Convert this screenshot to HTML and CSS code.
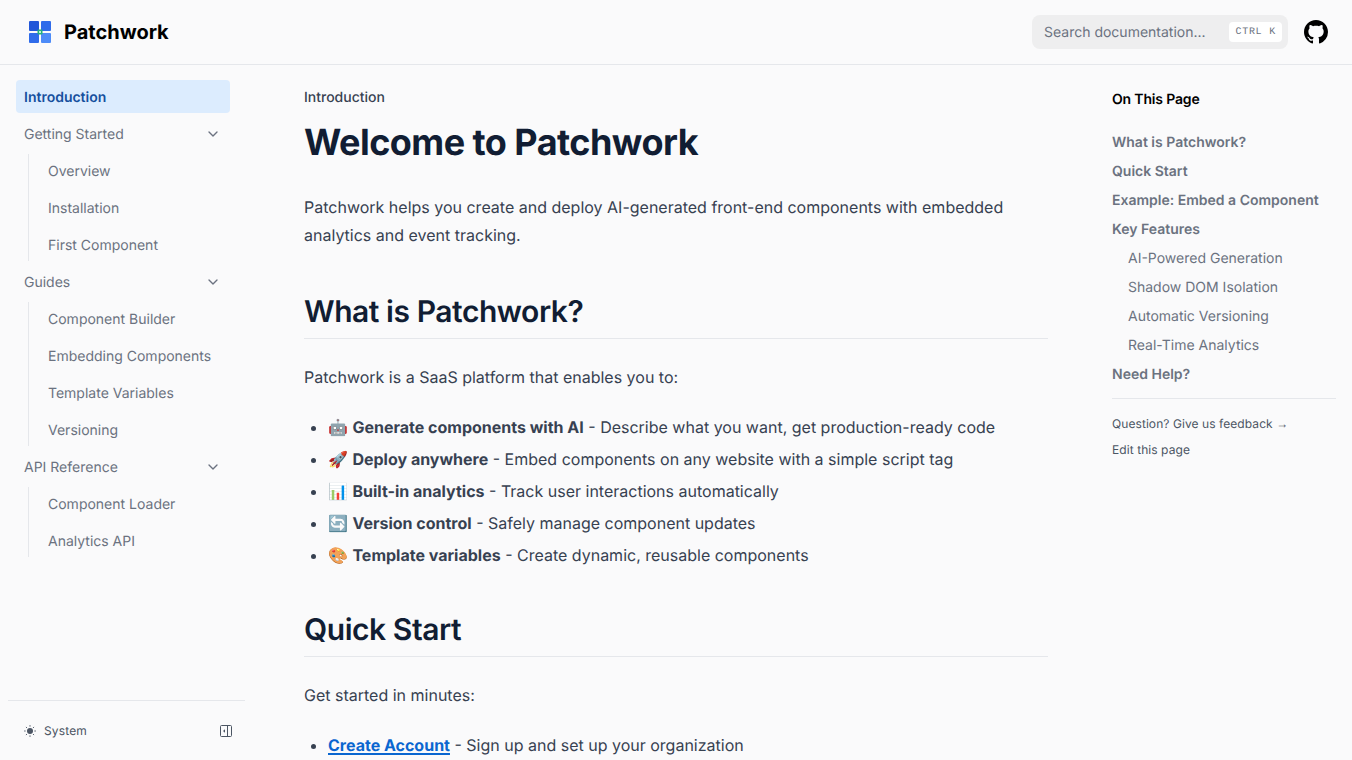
FILE: index.html
```html
<!DOCTYPE html>
<html lang="en">
<head>
<meta charset="utf-8">
<title>Welcome to Patchwork</title>
<link rel="stylesheet" href="styles.css">
</head>
<body>
<header class="topbar">
  <a class="brand">
    <svg class="logo" width="24" height="24" viewBox="0 0 24 24">
      <rect x="1" y="1" width="10" height="10" rx="1" fill="#2257d8"/>
      <rect x="13" y="1" width="10" height="10" rx="1" fill="#2f6bea"/>
      <rect x="1" y="13" width="10" height="10" rx="1" fill="#2f6bea"/>
      <rect x="13" y="13" width="10" height="10" rx="1" fill="#4d8bf8"/>
      <rect x="9.5" y="9.5" width="5" height="5" rx="1.2" fill="#22b07d"/>
      <rect x="11" y="11" width="2" height="2" fill="#bfeeda"/>
    </svg>
    <span class="brand-name">Patchwork</span>
  </a>
  <div class="top-actions">
    <div class="search">
      <span class="search-text">Search documentation...</span>
      <kbd class="kbd"><span>CTRL</span><span>K</span></kbd>
    </div>
    <svg class="github" width="24" height="24" viewBox="0 0 16 16" fill="#000"><path d="M8 0C3.58 0 0 3.58 0 8c0 3.54 2.29 6.53 5.47 7.59.4.07.55-.17.55-.38 0-.19-.01-.82-.01-1.49-2.01.37-2.53-.49-2.69-.94-.09-.23-.48-.94-.82-1.13-.28-.15-.68-.52-.01-.53.63-.01 1.08.58 1.23.82.72 1.21 1.87.87 2.33.66.07-.52.28-.87.51-1.07-1.78-.2-3.64-.89-3.64-3.95 0-.87.31-1.59.82-2.15-.08-.2-.36-1.02.08-2.12 0 0 .67-.21 2.2.82.64-.18 1.32-.27 2-.27s1.36.09 2 .27c1.53-1.04 2.2-.82 2.2-.82.44 1.1.16 1.92.08 2.12.51.56.82 1.27.82 2.15 0 3.07-1.87 3.75-3.65 3.95.29.25.54.73.54 1.48 0 1.07-.01 1.93-.01 2.2 0 .21.15.46.55.38A8.01 8.01 0 0 0 16 8c0-4.42-3.58-8-8-8z"/></svg>
  </div>
</header>

<div class="layout">
  <aside class="sidebar">
    <nav class="side-nav">
      <a class="side-link active">Introduction</a>
      <a class="side-link folder">Getting Started<svg class="chev" width="16" height="16" viewBox="0 0 24 24" fill="none" stroke="currentColor" stroke-width="2" stroke-linecap="round" stroke-linejoin="round"><path d="M6 9l6 6 6-6"/></svg></a>
      <div class="sub">
        <a class="side-link">Overview</a>
        <a class="side-link">Installation</a>
        <a class="side-link">First Component</a>
      </div>
      <a class="side-link folder">Guides<svg class="chev" width="16" height="16" viewBox="0 0 24 24" fill="none" stroke="currentColor" stroke-width="2" stroke-linecap="round" stroke-linejoin="round"><path d="M6 9l6 6 6-6"/></svg></a>
      <div class="sub">
        <a class="side-link">Component Builder</a>
        <a class="side-link">Embedding Components</a>
        <a class="side-link">Template Variables</a>
        <a class="side-link">Versioning</a>
      </div>
      <a class="side-link folder">API Reference<svg class="chev" width="16" height="16" viewBox="0 0 24 24" fill="none" stroke="currentColor" stroke-width="2" stroke-linecap="round" stroke-linejoin="round"><path d="M6 9l6 6 6-6"/></svg></a>
      <div class="sub">
        <a class="side-link">Component Loader</a>
        <a class="side-link">Analytics API</a>
      </div>
    </nav>
    <div class="side-foot">
      <span class="theme">
        <svg width="12" height="12" viewBox="0 0 12 12" fill="#4b5563" stroke="#4b5563" stroke-width="1" stroke-linecap="round"><circle cx="6" cy="6" r="3" stroke="none"/><path d="M6 .6v.6M6 10.8v.6M.6 6h.6M10.8 6h.6M2.2 2.2l.4.4M9.4 9.4l.4.4M2.2 9.8l.4-.4M9.4 2.6l.4-.4"/></svg>
        System
      </span>
      <svg class="collapse" width="14" height="14" viewBox="0 0 14 14" fill="none" stroke="#4b5563"><rect x="1.5" y="1.5" width="11" height="11" rx="1"/><path d="M8.5 1.5v11"/><path d="M6 5.2v3.6L4 7z" fill="#4b5563" stroke="none"/></svg>
    </div>
  </aside>

  <main class="article">
    <div class="crumb">Introduction</div>
    <h1>Welcome to Patchwork</h1>
    <p class="lead">Patchwork helps you create and deploy AI-generated front-end components with embedded analytics and event tracking.</p>
    <h2>What is Patchwork?</h2>
    <p>Patchwork is a SaaS platform that enables you to:</p>
    <ul>
      <li>🤖 <strong>Generate components with AI</strong> - Describe what you want, get production-ready code</li>
      <li>🚀 <strong>Deploy anywhere</strong> - Embed components on any website with a simple script tag</li>
      <li>📊 <strong>Built-in analytics</strong> - Track user interactions automatically</li>
      <li>🔄 <strong>Version control</strong> - Safely manage component updates</li>
      <li>🎨 <strong>Template variables</strong> - Create dynamic, reusable components</li>
    </ul>
    <h2>Quick Start</h2>
    <p>Get started in minutes:</p>
    <ul>
      <li><a class="doc-link">Create Account</a> - Sign up and set up your organization</li>
    </ul>
  </main>

  <aside class="toc">
    <div class="toc-title">On This Page</div>
    <ul class="toc-list">
      <li class="toc-h2">What is Patchwork?</li>
      <li class="toc-h2">Quick Start</li>
      <li class="toc-h2">Example: Embed a Component</li>
      <li class="toc-h2">Key Features</li>
      <li class="toc-h3">AI-Powered Generation</li>
      <li class="toc-h3">Shadow DOM Isolation</li>
      <li class="toc-h3">Automatic Versioning</li>
      <li class="toc-h3">Real-Time Analytics</li>
      <li class="toc-h2">Need Help?</li>
    </ul>
    <div class="toc-foot">
      <a>Question? Give us feedback <span class="arrow">→</span></a>
      <a>Edit this page</a>
    </div>
  </aside>
</div>
</body>
</html>
```
FILE: styles.css
```css
* { box-sizing: border-box; }
html, body { height: 100%; overflow: hidden; }
body {
  margin: 0;
  background: #fafafb;
  color: #111827;
  font-family: Inter, "Noto Color Emoji", sans-serif;
  font-size: 16px;
  text-rendering: geometricPrecision;
}
.topbar {
  height: 65px;
  display: flex;
  align-items: center;
  justify-content: space-between;
  padding: 0 24px 0 28px;
  border-bottom: 1px solid #e5e7eb;
}
.brand { display: flex; align-items: center; gap: 12px; }
.logo { display: block; }
.brand-name { font-size: 20px; font-weight: 700; color: #000; line-height: 28px; }
.top-actions { display: flex; align-items: center; gap: 16px; }
.search {
  width: 256px;
  height: 34px;
  border-radius: 8px;
  background: #eeeeef;
  display: flex;
  align-items: center;
  justify-content: space-between;
  padding: 0 6px 0 12px;
}
.search-text { font-size: 14px; color: #6b7280; }
.kbd {
  height: 20px;
  background: #fff;
  border-radius: 4px;
  padding: 1px 6px 0 6px;
  display: flex;
  align-items: center;
  gap: 7px;
  font-family: "Liberation Mono", monospace;
  font-size: 10px;
  letter-spacing: .7px;
  color: #6b7280;
}
.github { display: block; }
.layout {
  display: grid;
  grid-template-columns: 256px 1fr 256px;
  height: 695px;
}
.sidebar {
  display: flex;
  flex-direction: column;
  justify-content: space-between;
  min-height: 0;
}
.side-nav {
  padding: 15px 26px 0 16px;
  display: flex;
  flex-direction: column;
  gap: 4px;
}
.side-link {
  display: flex;
  align-items: center;
  justify-content: space-between;
  height: 33px;
  padding: 2px 8px 0;
  border-radius: 4px;
  font-size: 14px;
  color: #6b7280;
}
.side-link.active {
  background: #dcecfe;
  color: #16509e;
  font-weight: 600;
}
.chev { color: #6b7280; margin: -2px 1px 0 0; }
.sub {
  margin-left: 12px;
  padding-left: 11px;
  display: flex;
  flex-direction: column;
  gap: 4px;
  border-left: 1px solid #e5e7eb;
}
.side-foot {
  margin: 0 11px 0 8px;
  height: 60px;
  border-top: 1px solid #e5e7eb;
  display: flex;
  align-items: center;
  justify-content: space-between;
  padding: 0 12px 0 16px;
}
.theme { display: flex; align-items: center; gap: 8px; font-size: 12px; letter-spacing: .012em; color: #4b5563; }
.article { padding: 0 48px; overflow: hidden; min-width: 0; color: #374151; }
.crumb { margin-top: 23px; font-size: 14px; font-weight: 500; line-height: 20px; color: #374151; }
h1 {
  margin: 14px 0 0;
  font-size: 36px;
  line-height: 40px;
  font-weight: 700;
  letter-spacing: -.015em;
  color: #111d33;
}
p { margin: 24px 0 0; line-height: 28px; }
.lead { margin: 31px 0 45px; }
h2 {
  margin: 43px 0 0;
  padding-bottom: 8px;
  border-bottom: 1px solid #e5e7eb;
  font-size: 30px;
  line-height: 36px;
  font-weight: 600;
  letter-spacing: -.015em;
  color: #111d33;
}
.lead + h2 { margin-top: 0; }
ul { margin: 0; padding: 0; list-style: none; }
.article ul { margin-top: 22px; padding-left: 24px; list-style: disc; }
.article li { line-height: 28px; margin-top: 4px; }
.article li:first-child { margin-top: 0; }
strong { font-weight: 700; }
.doc-link {
  color: #0a66d0;
  font-weight: 700;
  text-decoration: underline;
  text-decoration-thickness: 2px;
  text-underline-offset: 2px;
}
.toc { padding: 25px 16px 0; font-size: 14px; }
.toc-title { font-weight: 600; color: #000; line-height: 20px; letter-spacing: -.012em; }
.toc-list { margin-top: 23px; display: flex; flex-direction: column; gap: 9px; padding-bottom: 13px; border-bottom: 1px solid #e5e7eb; }
.toc-list li { line-height: 20px; color: #6b7280; }
.toc-h2 { font-weight: 600; }
.toc-h3 { padding-left: 16px; }
.toc-foot { margin-top: 17px; display: flex; flex-direction: column; gap: 10px; font-size: 12px; line-height: 16px; letter-spacing: .006em; color: #4b5563; }
.arrow { font-family: "Liberation Sans", sans-serif; }
```
